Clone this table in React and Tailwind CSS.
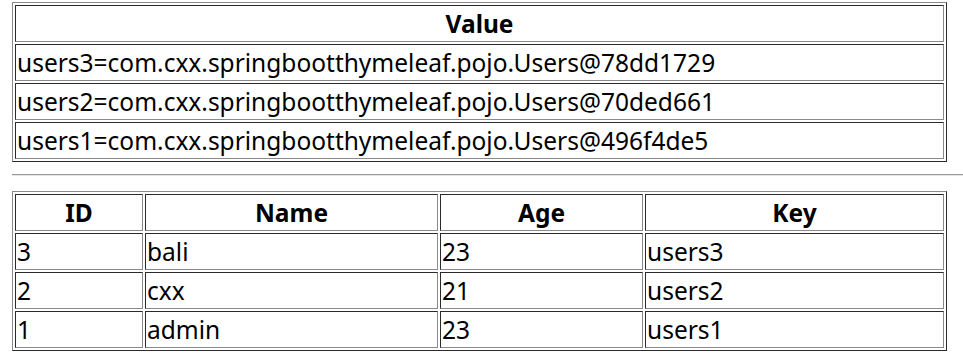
const values = [
  'users3=com.cxx.springbootthymeleaf.pojo.Users@78dd1729',
  'users2=com.cxx.springbootthymeleaf.pojo.Users@70ded661',
  'users1=com.cxx.springbootthymeleaf.pojo.Users@496f4de5',
]

const users = [
  { id: 3, name: 'bali', age: 23, key: 'users3' },
  { id: 2, name: 'cxx', age: 21, key: 'users2' },
  { id: 1, name: 'admin', age: 23, key: 'users1' },
]

const tableCls =
  'border-separate border-spacing-[2px] border border-t-[#8a8a8a] border-l-[#8a8a8a] border-b-[#2a2a2a] border-r-[#2a2a2a]'
const cellCls =
  'border border-t-[#2a2a2a] border-l-[#2a2a2a] border-b-[#8a8a8a] border-r-[#8a8a8a] p-px h-[37px] leading-[33px] align-middle'

export default function App() {
  return (
    <div
      className="bg-white text-black pt-[2px] pl-3 text-[24.5px] min-h-[358px]"
      style={{ fontFamily: '"Noto Sans", "Open Sans", sans-serif' }}
    >
      <table className={`${tableCls} w-[935px]`}>
        <thead>
          <tr>
            <th className={`${cellCls} font-bold text-center`}>Value</th>
          </tr>
        </thead>
        <tbody>
          {values.map(v => (
            <tr key={v}>
              <td className={`${cellCls} text-left`}>{v}</td>
            </tr>
          ))}
        </tbody>
      </table>

      <hr className="mt-3 mb-[15px] border-0 border-t border-t-[#9a9a9a] border-b border-b-[#e6e6e6] w-[960px]" />

      <table className={`${tableCls} w-[935px] table-fixed`}>
        <colgroup>
          <col className="w-[128px]" />
          <col className="w-[293px]" />
          <col className="w-[203px]" />
          <col />
        </colgroup>
        <thead>
          <tr>
            <th className={`${cellCls} font-bold text-center`}>ID</th>
            <th className={`${cellCls} font-bold text-center`}>Name</th>
            <th className={`${cellCls} font-bold text-center`}>Age</th>
            <th className={`${cellCls} font-bold text-center`}>Key</th>
          </tr>
        </thead>
        <tbody>
          {users.map(u => (
            <tr key={u.id}>
              <td className={cellCls}>{u.id}</td>
              <td className={cellCls}>{u.name}</td>
              <td className={cellCls}>{u.age}</td>
              <td className={cellCls}>{u.key}</td>
            </tr>
          ))}
        </tbody>
      </table>
    </div>
  )
}
